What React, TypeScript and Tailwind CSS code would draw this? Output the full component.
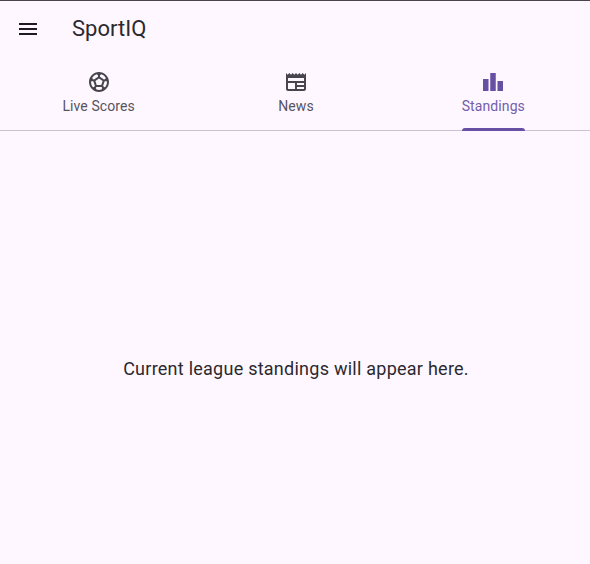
import { MdSportsSoccer, MdNewspaper, MdLeaderboard, MdMenu } from "react-icons/md";

const tabs = [
  { label: "Live Scores", Icon: MdSportsSoccer, active: false },
  { label: "News", Icon: MdNewspaper, active: false },
  { label: "Standings", Icon: MdLeaderboard, active: true },
];

export default function App() {
  return (
    <div className="h-[564px] w-full overflow-hidden bg-[#fef7ff] font-['Roboto',sans-serif] text-[#1d1b20]">
      <div className="flex h-[607px] w-[592px] flex-col border-t border-[#49454f]">
        <header className="flex h-14 shrink-0 items-center pl-4">
          <button aria-label="Menu" className="flex size-6">
            <MdMenu size={24} />
          </button>
          <h1 className="ml-8 text-[22px] leading-7 text-[#2b292e]">SportIQ</h1>
        </header>
        <nav className="flex h-[74px] shrink-0 border-b border-[#cac4d0]">
          {tabs.map(({ label, Icon, active }) => (
            <div key={label} className={active ? "flex flex-1 justify-center text-[#6750a4]" : "flex flex-1 justify-center text-[#49454f]"}>
              <div className="relative flex flex-col items-center pt-[13px]">
                <Icon size={24} />
                <span className={active ? "mt-0.5 text-sm leading-5 tracking-[0.1px] text-[#735eab]" : "mt-0.5 text-sm leading-5 tracking-[0.1px] text-[#57535d]"}>{label}</span>
                {active && <div className="absolute inset-x-0 -bottom-px h-[3px] rounded-t-[3px] bg-[#6750a4]" />}
              </div>
            </div>
          ))}
        </nav>
        <main className="flex flex-1 items-center justify-center">
          <p className="text-lg tracking-[0.25px] text-[#2b292e]">Current league standings will appear here.</p>
        </main>
      </div>
    </div>
  );
}
